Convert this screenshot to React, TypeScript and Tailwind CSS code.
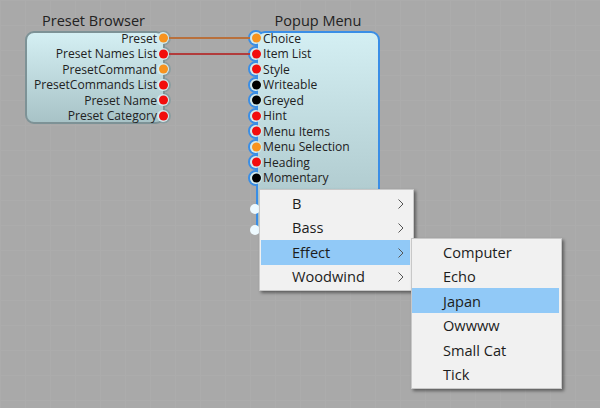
const presetPins = [
  { label: "Preset", color: "bg-[#f7931e]" },
  { label: "Preset Names List", color: "bg-[#f20d0d]" },
  { label: "PresetCommand", color: "bg-[#f7931e]" },
  { label: "PresetCommands List", color: "bg-[#f20d0d]" },
  { label: "Preset Name", color: "bg-[#f20d0d]" },
  { label: "Preset Category", color: "bg-[#f20d0d]" },
];

const popupPins = [
  { label: "Choice", color: "bg-[#f7931e]" },
  { label: "Item List", color: "bg-[#f20d0d]" },
  { label: "Style", color: "bg-[#f20d0d]" },
  { label: "Writeable", color: "bg-black" },
  { label: "Greyed", color: "bg-black" },
  { label: "Hint", color: "bg-[#f20d0d]" },
  { label: "Menu Items", color: "bg-[#f20d0d]" },
  { label: "Menu Selection", color: "bg-[#f7931e]" },
  { label: "Heading", color: "bg-[#f20d0d]" },
  { label: "Momentary", color: "bg-black" },
];

const mainItems = ["B", "Bass", "Effect", "Woodwind"];
const subItems = ["Computer", "Echo", "Japan", "Owwww", "Small Cat", "Tick"];

function Chevron() {
  return (
    <svg width="6" height="10" viewBox="0 0 6 10" className="ml-auto" fill="none" stroke="#555" strokeWidth="1">
      <path d="M0.5 0.5 L5 5 L0.5 9.5" />
    </svg>
  );
}

export default function App() {
  return (
    <div className="relative isolate w-[600px] h-[408px] overflow-hidden bg-[#a9a9a9] bg-[linear-gradient(#acacac_1px,transparent_1px),linear-gradient(90deg,#acacac_1px,transparent_1px)] bg-[size:25px_25px] text-[#222] text-[12.1px] font-['Open_Sans','Noto_Sans',sans-serif]">
      {/* wires */}
      <svg width="600" height="408" className="absolute inset-0">
        <path d="M168 38 H252" stroke="#b8703c" strokeWidth="2" />
        <path d="M168 54 H252" stroke="#b23c3c" strokeWidth="2" />
      </svg>

      {/* Preset Browser */}
      <div className="absolute left-[25px] top-[10px] w-[140px] flex flex-col">
        <div className="text-center text-[14.5px] leading-[21px] pr-[3px]">Preset Browser</div>
        <div className="relative h-[93px] rounded-[9px] border-2 border-[#7d9296] bg-gradient-to-b from-[#d4eff3] to-[#a8c3c7]">
          <div className="flex flex-col -mt-[2.75px]">
            {presetPins.map((pin) => (
              <div key={pin.label} className="relative h-[15.5px] flex items-center justify-end whitespace-nowrap pt-[1.5px] pr-[6px] leading-none">
                {pin.label}
                <span className="absolute top-1/2 -translate-y-1/2 right-[-7.5px] w-[15px] h-[15px] rounded-full border-2 border-[#8a9da1] -z-10" />
                <span className="absolute top-1/2 -translate-y-1/2 right-[-6px] w-[12px] h-[12px] rounded-full bg-[#d2ebef]" />
                <span className={`absolute top-1/2 -translate-y-1/2 right-[-4.5px] w-[9px] h-[9px] rounded-full ${pin.color}`} />
              </div>
            ))}
          </div>
        </div>
      </div>

      {/* Popup Menu */}
      <div className="absolute left-[256px] top-[10px] w-[124px] flex flex-col">
        <div className="text-center text-[14.5px] leading-[21px]">Popup Menu</div>
        <div className="relative h-[205px] rounded-[9px] border-2 border-[#3a8ee6] bg-gradient-to-b from-[#d4eff3] to-[#a8c3c7]">
          <div className="flex flex-col -mt-[2.75px]">
            {popupPins.map((pin) => (
              <div key={pin.label} className="relative h-[15.5px] flex items-center whitespace-nowrap pt-[1.5px] pl-[5px] leading-none">
                {pin.label}
                <span className="absolute top-1/2 -translate-y-1/2 left-[-10px] w-[16px] h-[16px] rounded-full border-2 border-[#3a8ee6] -z-10" />
                <span className="absolute top-1/2 -translate-y-1/2 left-[-8px] w-[12px] h-[12px] rounded-full bg-[#d2ebef]" />
                <span className={`absolute top-1/2 -translate-y-1/2 left-[-6.5px] w-[9px] h-[9px] rounded-full ${pin.color}`} />
              </div>
            ))}
          </div>
          <span className="absolute left-[-8px] top-[171px] w-[10px] h-[10px] rounded-full bg-[#eefaff]" />
          <span className="absolute left-[-8px] top-[192px] w-[10px] h-[10px] rounded-full bg-[#eefaff]" />
        </div>
      </div>

      {/* main context menu */}
      <div className="absolute left-[259px] top-[189px] w-[155px] flex flex-col pt-[1px] pb-[1px] pl-[1px] pr-[3px] bg-[#f1f1f1] border border-[#c8c8c8] shadow-[2px_2px_3px_rgba(0,0,0,0.45)] text-[14.6px] text-[#1c1c1c]">
        {mainItems.map((item) => (
          <div key={item} className={`h-[24.5px] flex items-center pt-[1px] pl-[31px] pr-[6px] ${item === "Effect" ? "bg-[#91c9f7]" : ""}`}>
            {item}
            <Chevron />
          </div>
        ))}
      </div>

      {/* sub menu */}
      <div className="absolute left-[411px] top-[238px] w-[151px] flex flex-col pb-[2px] pr-[2px] bg-[#f1f1f1] border border-[#c8c8c8] shadow-[2px_2px_3px_rgba(0,0,0,0.45)] text-[14.6px] text-[#1c1c1c]">
        {subItems.map((item) => (
          <div key={item} className={`h-[24.5px] flex items-center pt-[3px] pl-[31px] ${item === "Japan" ? "bg-[#91c9f7]" : ""}`}>
            {item}
          </div>
        ))}
      </div>
    </div>
  );
}
